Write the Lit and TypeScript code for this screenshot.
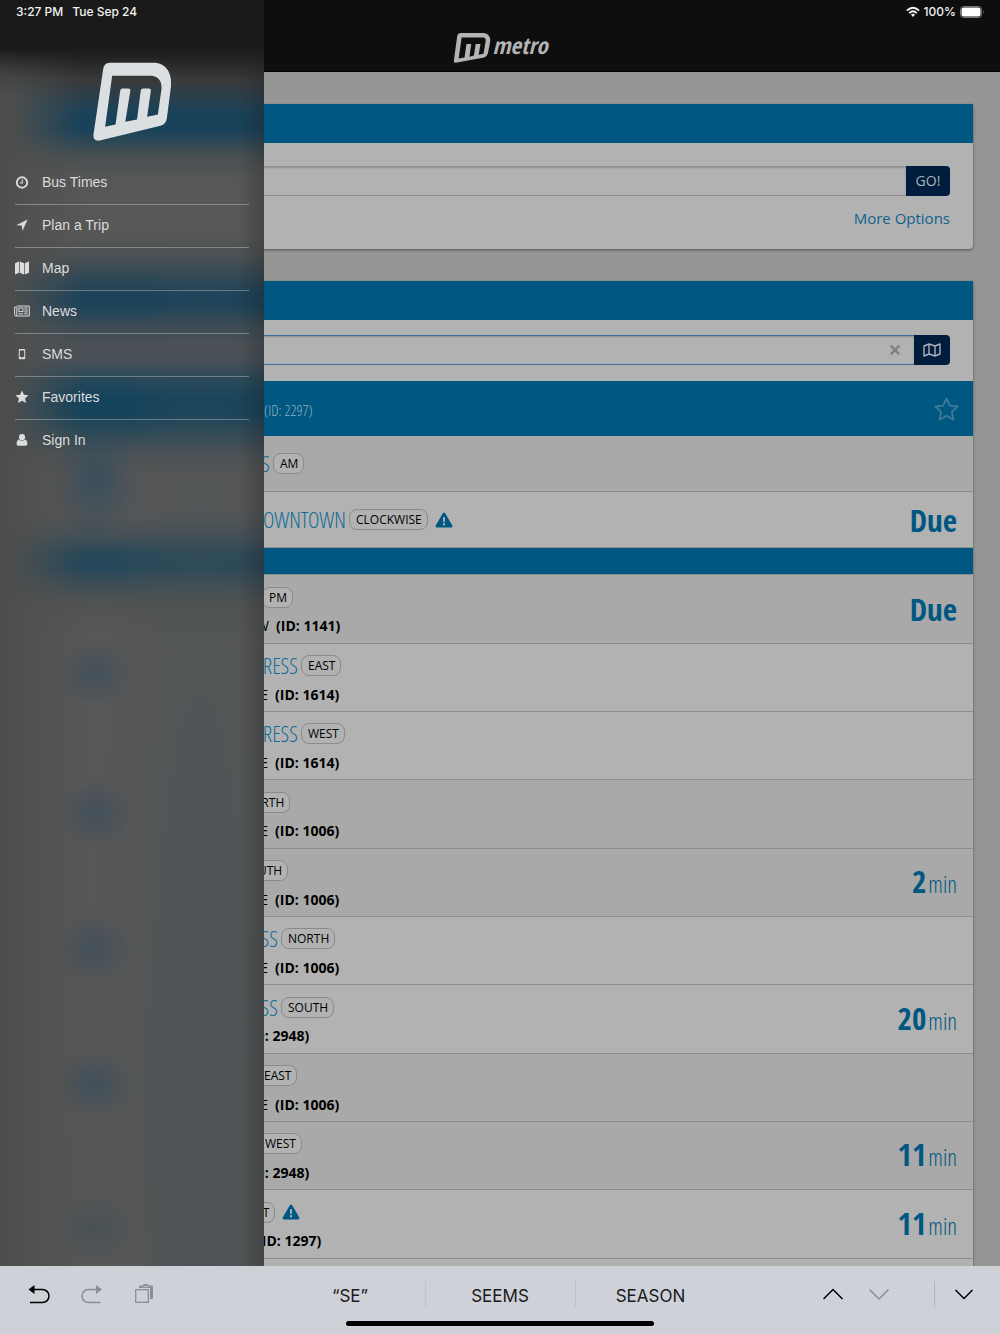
import { LitElement, html, css, svg, nothing } from "lit";
import { customElement } from "lit/decorators.js";
import { classMap } from "lit/directives/class-map.js";
import { styleMap } from "lit/directives/style-map.js";

interface Arrival {
  name: string;
  /** width in pixels that the route name takes up */
  nameWidth: number;
  direction: string;
  shaded: boolean;
  alert?: boolean;
  street?: string;
  streetWidth?: number;
  stopId?: string;
  due?: string;
  minutes?: number;
}

const HERE: Arrival[] = [
  { name: "EXPRESS", nameWidth: 143, direction: "AM", shaded: true },
  { name: "DOWNTOWN", nameWidth: 219, direction: "CLOCKWISE", shaded: false, alert: true, due: "Due" },
];

const NEARBY: Arrival[] = [
  { name: "", nameWidth: 132, direction: "PM", shaded: true, street: "W", streetWidth: 142, stopId: "1141", due: "Due" },
  { name: "EXPRESS", nameWidth: 171, direction: "EAST", shaded: false, street: "E", streetWidth: 141, stopId: "1614" },
  { name: "EXPRESS", nameWidth: 171, direction: "WEST", shaded: false, street: "E", streetWidth: 141, stopId: "1614" },
  { name: "", nameWidth: 106, direction: "NORTH", shaded: true, street: "E", streetWidth: 141, stopId: "1006" },
  { name: "", nameWidth: 105, direction: "SOUTH", shaded: true, street: "E", streetWidth: 141, stopId: "1006", minutes: 2 },
  { name: "EXPRESS", nameWidth: 151, direction: "NORTH", shaded: false, street: "E", streetWidth: 141, stopId: "1006" },
  { name: "EXPRESS", nameWidth: 151, direction: "SOUTH", shaded: false, street: "", streetWidth: 111, stopId: "2948", minutes: 20 },
  { name: "", nameWidth: 127, direction: "EAST", shaded: true, street: "E", streetWidth: 141, stopId: "1006" },
  { name: "", nameWidth: 128, direction: "WEST", shaded: true, street: "", streetWidth: 111, stopId: "2948", minutes: 11 },
  { name: "", nameWidth: 105, direction: "EAST", shaded: false, alert: true, street: "", streetWidth: 123, stopId: "1297", minutes: 11 },
];

const logo = html`<svg class="mark" viewBox="0 0 250 250" aria-hidden="true">
  <path fill="currentColor" fill-rule="evenodd" d="M58 8H190C225 8 245 38 241 78L229 172Q226 192 210 196L32 239Q10 244 10 224L39 28Q42 8 58 8ZM66 47L45 199L76 192L90 91Q91 85 97 85H114Q121 85 120 92L105 184L140 177L151 91Q152 85 158 85H175Q182 85 181 92L170 169L202 162L213 85C214 62 202 47 180 47Z"/>
</svg>`;

const wideLogo = html`<svg class="mark" viewBox="0 0 100 81" aria-hidden="true">
  <path fill="currentColor" fill-rule="evenodd" d="M20 0H80C94 1 101 10 99 24L93 55Q91 64 83 66L6 80Q0 81 1 75L10 9Q12 0 20 0ZM22 12L14 69L30 66L35 30H48L43 64L55 61L60 30H73L68 59L81 56L87 22Q88 13 80 12Z"/>
</svg>`;

const MENU = [
  { label: "Bus Times", icon: svg`<circle cx="8" cy="8.5" r="5.2" fill="none" stroke="currentColor" stroke-width="1.9"/><path d="M8.3 5.5V9H5.8" fill="none" stroke="currentColor" stroke-width="1.1"/>` },
  { label: "Plan a Trip", icon: svg`<path fill="currentColor" d="M13.6 2.6L8.4 14L7.8 8.6L2.2 8.3Z"/>` },
  { label: "Map", icon: svg`<path fill="currentColor" d="M1 3.2L5 1.4V12.8L1 14.6ZM5.7 1.4L10 3.2V14.6L5.7 12.8ZM10.7 3.2L15 1.4V12.8L10.7 14.6Z"/>` },
  { label: "News", icon: svg`<g fill="none" stroke="currentColor"><path d="M2.8 3H15.3V13H2.2Q.6 13 .6 11.6V4.2H2.8V11.4Q2.8 12.6 1.8 12.9"/><rect x="4.9" y="5" width="4" height="3.6"/><path d="M10.2 4.9H13.8M10.2 6.9H13.8M10.2 8.9H13.8M4.4 10.9H9.2M10.2 10.9H13.8"/></g>` },
  { label: "SMS", icon: svg`<path fill="currentColor" fill-rule="evenodd" d="M5.8 3H10.2Q11.2 3 11.2 4V12.2Q11.2 13.2 10.2 13.2H5.8Q4.8 13.2 4.8 12.2V4Q4.8 3 5.8 3ZM5.8 4.6V11H10.2V4.6ZM7.5 11.6V12.5H8.5V11.6Z"/>` },
  { label: "Favorites", icon: svg`<path fill="currentColor" d="M8 1.6L9.9 5.8L14.4 6.3L11.1 9.4L12 13.9L8 11.7L4 13.9L4.9 9.4L1.6 6.3L6.1 5.8Z"/>` },
  { label: "Sign In", icon: svg`<circle cx="8" cy="5.2" r="3.1" fill="currentColor"/><path fill="currentColor" d="M4.9 7.4Q8 10.2 11.1 7.4Q13.4 8 13.4 12Q13.4 13.8 11.8 13.8H4.2Q2.6 13.8 2.6 12Q2.6 8 4.9 7.4Z"/>` },
];

@customElement("app-root")
export class AppRoot extends LitElement {
  static styles = css`
    :host {
      display: flex;
      flex-direction: column;
      height: 100vh;
      overflow: hidden;
      font-family: "Open Sans", sans-serif;
      color: #000;
    }
    * { box-sizing: border-box; }
    ul { list-style: none; margin: 0; padding: 0; }
    button { font: inherit; border: 0; background: none; padding: 0; color: inherit; }
    a { color: inherit; text-decoration: none; }
    .screen { position: relative; flex: 1; min-height: 0; overflow: hidden; background: #969694; }

    .masthead {
      height: 72px;
      padding-top: 24px;
      background: #0e0e0e;
      border-bottom: 1px solid #000;
      display: flex;
      justify-content: center;
      align-items: center;
      color: #b4b4b4;
    }
    .brand { display: flex; align-items: center; gap: 2px; }
    .brand .mark { width: 38px; height: 30px; }
    .brand-name { font: italic 700 23px/24px "Open Sans Condensed", "Open Sans", sans-serif; padding-bottom: 6px; }

    .status {
      position: absolute;
      inset: 0 0 auto 0;
      height: 24px;
      padding: 0 15px 0 16px;
      display: flex;
      align-items: center;
      justify-content: space-between;
      font: 500 12px/16px Inter, sans-serif;
      color: #f2f2f2;
    }
    .status-group { display: flex; align-items: center; gap: 9px; }
    .status-group.tight { gap: 4px; }
    .wifi { width: 14px; height: 12px; }
    .battery { width: 25px; height: 12px; }

    .cards { padding: 32px 27px 0; display: flex; flex-direction: column; gap: 32px; }
    .card { background: #b2b2b2; border-radius: 0 0 4px 4px; box-shadow: 0 1px 3px rgba(0, 0, 0, 0.45); }
    .card-head { height: 39px; background: #005782; }
    .card-body { padding: 23px 23px 20px; }
    .card-body.stops { padding: 15px 23px 16px; }
    .field { display: flex; height: 30px; }
    .field-box {
      flex: 1;
      display: flex;
      align-items: center;
      border: 1px solid #8f8f8f;
      border-right: 0;
      border-radius: 4px 0 0 4px;
      box-shadow: inset 0 1px 2px rgba(0, 0, 0, 0.2);
    }
    .field-box.focused { border-color: #40709c; padding-right: 12px; }
    .field-box input {
      flex: 1;
      min-width: 0;
      height: 28px;
      border: 0;
      outline: 0;
      background: none;
      font: 14px/20px "Open Sans", sans-serif;
    }
    .clear { display: flex; color: #828282; }
    .clear svg { width: 14px; height: 14px; }
    .go {
      width: 44px;
      background: #001d3e;
      color: #aab0b8;
      border-radius: 0 4px 4px 0;
      font-size: 14px;
      line-height: 20px;
      display: flex;
      align-items: center;
      justify-content: center;
    }
    .go.map { width: 36px; }
    .go svg { width: 18px; height: 16px; }
    .more { display: block; text-align: right; margin-top: 11px; font-size: 15px; line-height: 22px; color: #0f638c; }

    .stop-head {
      height: 55px;
      padding: 0 14px 0 237px;
      background: #005782;
      color: #8fb0c0;
      display: flex;
      align-items: center;
      justify-content: space-between;
      font: 300 15px/20px "Open Sans Condensed Light", "Open Sans Condensed", "Open Sans", sans-serif;
    }
    .stop-head > span { padding-top: 3px; }
    .stop-head svg { width: 25px; height: 24px; color: #3e7a98; display: block; }
    .divider { height: 27px; background: #005782; border-bottom: 1px solid #8c8c8c; }

    .row {
      height: 68px;
      border-bottom: 1px solid #8c8c8c;
      padding: 0 16px 0 100px;
      display: flex;
      align-items: center;
    }
    .row.single { height: 56px; }
    .nearby .row:nth-child(3n + 1) { height: 69px; }
    .row.shaded { background: #a9a9a9; }
    /* the part that lies behind the open drawer is cut away */
    .info { flex: 1; min-width: 0; display: flex; flex-direction: column; gap: 8px; clip-path: inset(0 0 0 137px); }
    .nearby .info { padding-top: 4px; }
    .line { display: flex; align-items: center; gap: 3px; height: 21px; white-space: nowrap; }
    .name {
      flex: none;
      text-align: right;
      color: #0f6c98;
      font: 300 22px/21px "Open Sans Condensed Light", "Open Sans Condensed", "Open Sans", sans-serif;
    }
    .pill {
      height: 21px;
      padding: 0 5px 0 6px;
      border: 1px solid #8a8a8a;
      border-radius: 8px;
      background: #b2b2b2;
      font-size: 12px;
      line-height: 19px;
    }
    .alert { width: 18px; height: 16px; margin-left: 4px; color: #005782; }
    .line.stop { gap: 7px; font-size: 14px; font-weight: 700; height: 20px; }
    .street { flex: none; text-align: right; font-weight: 400; }
    .eta {
      display: flex;
      align-items: baseline;
      gap: 2px;
      color: #005782;
      font: 700 31px/40px "Open Sans Condensed", "Open Sans", sans-serif;
    }
    .unit { font: 300 23px/40px "Open Sans Condensed Light", "Open Sans Condensed", "Open Sans", sans-serif; }

    .drawer {
      position: absolute;
      inset: 0 auto 0 0;
      width: 264px;
      padding: 62px 15px 0;
      overflow: hidden;
      font: 14px/20px "Liberation Sans", sans-serif;
      color: #dcdcdc;
      background:
        linear-gradient(270deg, rgba(30, 30, 30, 0.3) 0, rgba(30, 30, 30, 0) 26px),
        radial-gradient(45px 60px at 95px 480px, rgba(40, 74, 96, 0.6), rgba(40, 74, 96, 0)),
        radial-gradient(38px 34px at 95px 674px, rgba(60, 78, 92, 0.75), rgba(60, 78, 92, 0)),
        radial-gradient(38px 34px at 95px 813px, rgba(60, 78, 92, 0.75), rgba(60, 78, 92, 0)),
        radial-gradient(38px 34px at 93px 949px, rgba(60, 78, 92, 0.75), rgba(60, 78, 92, 0)),
        radial-gradient(38px 34px at 93px 1085px, rgba(60, 78, 92, 0.85), rgba(60, 78, 92, 0)),
        radial-gradient(38px 34px at 93px 1228px, rgba(64, 78, 86, 0.6), rgba(64, 78, 86, 0)),
        radial-gradient(110px 900px at 200px 1080px, rgba(74, 82, 86, 0.6), rgba(74, 82, 86, 0)),
        linear-gradient(#191919 0, #1a1a1a 48px, #272727 62px, #393a3a 80px, #2b3f4a 96px, #19425a 114px, #18425a 130px,
          #344a55 145px, #4b5052 158px, #575757 180px, #575756 235px, #4c5153 256px, #2f4855 278px, #1b425a 296px,
          #1f4459 308px, #3c4c55 326px, #4c5155 345px, #48515a 360px, #27485a 380px, #14435c 398px, #15435b 414px,
          #2f4a57 434px, #4c5255 454px, #565656 474px, #555657 515px, #455156 535px, #27485a 555px, #26485a 568px,
          #414e54 587px, #535452 606px, #575757 640px, #565656 100%);
    }
    .drawer::before {
      content: "";
      position: absolute;
      inset: 50px auto 0 0;
      width: 84px;
      background: linear-gradient(90deg, #4e4e4c 8px, rgba(80, 80, 78, 0.7) 30px, rgba(84, 84, 82, 0));
      mask-image: linear-gradient(transparent, #000 48px);
    }
    .panel { position: relative; }
    .panel > .mark { display: block; width: 84px; height: 84px; margin: -2px auto 17px; color: #dcdfe1; }
    .drawer li + li { border-top: 1px solid rgba(255, 255, 255, 0.3); }
    .drawer a { display: flex; align-items: center; gap: 12px; height: 43px; padding-bottom: 2px; margin-left: -1px; }
    .drawer li + li a { height: 42px; }
    .drawer a svg { width: 16px; height: 16px; }

    .keyboard { background: #ced1d8; color: #1a1a1a; display: flex; flex-direction: column; align-items: center; }
    .tools { align-self: stretch; height: 55px; display: flex; align-items: center; }
    .side { flex: 1; display: flex; align-items: center; }
    .side.edit { padding-left: 27px; gap: 29px; }
    .side.move { justify-content: flex-end; padding-right: 26px; gap: 24px; }
    .side button { display: flex; }
    .side svg { width: 24px; height: 24px; }
    .side.move svg { width: 22px; }
    .muted { color: #8c8e93; }
    .rule { width: 1px; height: 26px; background: #b0b3ba; margin: 0 -5px 0 20px; }
    .side.move .done svg { width: 20px; }
    .words { display: flex; }
    .words li { width: 150px; }
    .words li:not(:last-child) { border-right: 1px solid #bfc2c8; }
    .words button { width: 100%; height: 26px; font: 17px/26px Inter, sans-serif; padding-top: 2px; }
    .home { width: 308px; height: 5px; border-radius: 3px; background: #000; margin-bottom: 8px; }
  `;

  private arrival(a: Arrival) {
    return html`<li class=${classMap({ row: true, shaded: a.shaded, single: !a.stopId })}>
      <div class="info">
        <div class="line">
          <a class="name" href="#" style=${styleMap({ width: `${a.nameWidth}px` })}>${a.name}</a>
          <span class="pill">${a.direction}</span>
          ${a.alert
            ? html`<svg class="alert" viewBox="0 0 18 16" role="img" aria-label="Alert">
                <path fill="currentColor" fill-rule="evenodd" d="M9 .5Q9.8.5 10.3 1.4L17.3 13.6Q17.8 15.3 16.4 15.4H1.6Q.2 15.3.7 13.6L7.7 1.4Q8.2.5 9 .5ZM7.9 5.2L8.2 10.2H9.8L10.1 5.2ZM8 11.3V13.2H10V11.3Z"/>
              </svg>`
            : nothing}
        </div>
        ${a.stopId
          ? html`<div class="line stop">
              <span class="street" style=${styleMap({ width: `${a.streetWidth}px` })}>${a.street}</span>
              <span>(ID: ${a.stopId})</span>
            </div>`
          : nothing}
      </div>
      ${a.due ? html`<span class="eta">${a.due}</span>` : nothing}
      ${a.minutes ? html`<span class="eta">${a.minutes}<span class="unit">min</span></span>` : nothing}
    </li>`;
  }

  render() {
    return html`
      <div class="screen">
        <header class="masthead">
          <a class="brand" href="#">${wideLogo}<span class="brand-name">metro</span></a>
        </header>
        <main class="cards">
          <section class="card">
            <div class="card-head"></div>
            <form class="card-body">
              <div class="field">
                <div class="field-box"><input type="text" aria-label="Trip search" /></div>
                <button class="go" type="button">GO!</button>
              </div>
              <a class="more" href="#">More Options</a>
            </form>
          </section>
          <section class="card">
            <div class="card-head"></div>
            <div class="card-body stops">
              <div class="field">
                <div class="field-box focused">
                  <input type="text" aria-label="Stop search" />
                  <button class="clear" type="button" aria-label="Clear">
                    <svg viewBox="0 0 14 14"><path d="M3.4 3.4L10.6 10.6M10.6 3.4L3.4 10.6" stroke="currentColor" stroke-width="2.6" stroke-linecap="round"/></svg>
                  </button>
                </div>
                <button class="go map" type="button" aria-label="Map">
                  <svg viewBox="0 0 18 16" fill="none" stroke="currentColor" stroke-width="1.4" stroke-linejoin="round">
                    <path d="M1 4L6 2L12 4L17 2V12L12 14L6 12L1 14ZM6 2V12M12 4V14"/>
                  </svg>
                </button>
              </div>
            </div>
            <div class="stop-head">
              <span>(ID: 2297)</span>
              <button type="button" aria-label="Add to favorites">
                <svg viewBox="0 0 25 24" fill="none" stroke="currentColor" stroke-width="1.8" stroke-linejoin="round">
                  <path d="M12.5 1.4L15.8 8.6L23.6 9.5L17.9 14.8L19.4 22.6L12.5 18.7L5.6 22.6L7.1 14.8L1.4 9.5L9.2 8.6Z"/>
                </svg>
              </button>
            </div>
            <ul>${HERE.map((a) => this.arrival(a))}</ul>
            <div class="divider"></div>
            <ul class="nearby">${NEARBY.map((a) => this.arrival(a))}</ul>
            <div class="row"></div>
          </section>
        </main>
        <nav class="drawer" aria-label="Main">
          <div class="panel">
            ${logo}
            <ul>
              ${MENU.map((m) => html`<li><a href="#"><svg viewBox="0 0 16 16" aria-hidden="true">${m.icon}</svg>${m.label}</a></li>`)}
            </ul>
          </div>
        </nav>
        <div class="status">
          <div class="status-group"><span>3:27 PM</span><span>Tue Sep 24</span></div>
          <div class="status-group tight">
            <svg class="wifi" viewBox="0 0 14 12" fill="none" stroke="currentColor" stroke-width="1.8">
              <path d="M.9 4.6Q7-1.2 13.1 4.6M3.2 7.1Q7 3.5 10.8 7.1"/><path fill="currentColor" stroke="none" d="M4.9 8.6Q7 6.9 9.1 8.6L7 10.9Z"/>
            </svg>
            <span>100%</span>
            <svg class="battery" viewBox="0 0 25 12">
              <rect x=".5" y=".5" width="21" height="11" rx="3" fill="none" stroke="#77757a"/>
              <rect x="1.5" y="1.5" width="19" height="9" rx="2" fill="#fff"/><path d="M23 4Q24.6 6 23 8Z" fill="#77757a"/>
            </svg>
          </div>
        </div>
      </div>
      <footer class="keyboard">
        <div class="tools">
          <div class="side edit">
            <button type="button" aria-label="Undo">
              <svg viewBox="0 0 24 24"><path d="M5 7.5H15.5A6.3 6.3 0 0 1 15.5 20.5H3" fill="none" stroke="#000" stroke-width="1.5"/><path d="M1.5 7.5L7.5 3V12Z" fill="#000"/></svg>
            </button>
            <button class="muted" type="button" aria-label="Redo">
              <svg viewBox="0 0 24 24"><path d="M19 7.5H8.5A6.3 6.3 0 0 0 8.5 20.5H20.5" fill="none" stroke="currentColor" stroke-width="1.5"/><path d="M22 7.5L16 3V12Z" fill="currentColor"/></svg>
            </button>
            <button class="muted" type="button" aria-label="Paste">
              <svg viewBox="0 0 24 24"><rect x="2.7" y="7.7" width="12.6" height="12.6" fill="none" stroke="currentColor" stroke-width="1.3"/><path fill="currentColor" d="M6 6V4.5Q6 3.5 7 3.5H9.5Q10 2 11.5 2H14Q15.5 2 16 3.5H19Q20 3.5 20 4.5V16Q20 17 19 17H17V6Z"/><path d="M10.5 4.6H15.5" stroke="#ced1d8" stroke-width=".8"/></svg>
            </button>
          </div>
          <ul class="words">
            <li><button type="button">“SE”</button></li>
            <li><button type="button">SEEMS</button></li>
            <li><button type="button">SEASON</button></li>
          </ul>
          <div class="side move">
            <button type="button" aria-label="Previous field"><svg viewBox="0 0 22 24"><path d="M1.5 17L11 7.5L20.5 17" fill="none" stroke="#000" stroke-width="1.5"/></svg></button>
            <button class="muted" type="button" aria-label="Next field"><svg viewBox="0 0 22 24"><path d="M1.5 7.5L11 17L20.5 7.5" fill="none" stroke="currentColor" stroke-width="1.5"/></svg></button>
            <span class="rule"></span>
            <button class="done" type="button" aria-label="Hide keyboard"><svg viewBox="0 0 20 24"><path d="M1.5 8L10 16.5L18.5 8" fill="none" stroke="#000" stroke-width="1.5"/></svg></button>
          </div>
        </div>
        <div class="home"></div>
      </footer>
    `;
  }
}
